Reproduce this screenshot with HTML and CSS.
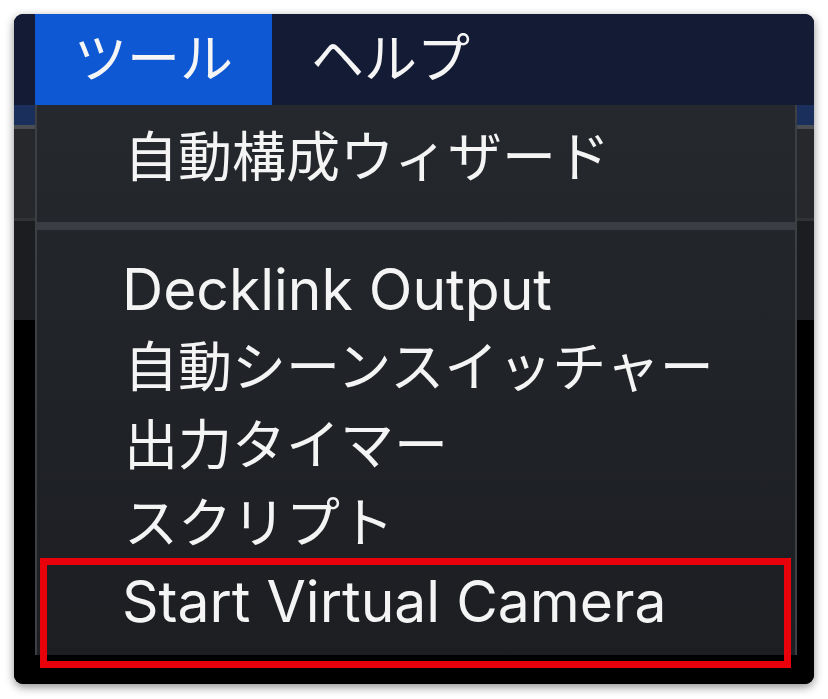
FILE: index.html
```html
<!DOCTYPE html>
<html>
<head>
    <meta charset="utf-8">
    <title>ツール メニュー</title>
    <link rel="stylesheet" href="styles.css">
</head>
<body>
    <div class="window">
        <div class="menubar">
            <div class="menubar-item active">ツール</div>
            <div class="menubar-item">ヘルプ</div>
        </div>

        <div class="app-body">
            <div class="band band-top"></div>
            <div class="band band-line"></div>
            <div class="band band-panel"></div>
            <div class="band band-line dim"></div>
            <div class="band band-dock"></div>
            <div class="band band-rest"></div>
        </div>

        <div class="dropdown">
            <div class="menu-item first">自動構成ウィザード</div>
            <div class="separator"></div>
            <div class="menu-item spaced latin">Decklink Output</div>
            <div class="menu-item">自動シーンスイッチャー</div>
            <div class="menu-item">出力タイマー</div>
            <div class="menu-item">スクリプト</div>
            <div class="menu-item latin">Start Virtual Camera</div>
        </div>

        <!-- annotation around the virtual camera entry -->
        <div class="highlight"></div>
    </div>
</body>
</html>
```

FILE: styles.css
```css
body {
    margin: 0;
    background: #fff;
    font-family: Inter, "Noto Sans CJK JP", sans-serif;
}
.window {
    position: relative;
    margin: 14px;
    width: 800px;
    height: 670px;
    border-radius: 9px;
    overflow: hidden;
    background: #000;
    box-shadow: 0 3px 10px rgba(0, 0, 0, 0.45);
    display: flex;
    flex-direction: column;
}
.menubar {
    height: 91px;
    flex: none;
    display: flex;
    padding-left: 21px;
    background: #131b35;
}
.menubar-item {
    padding: 0 39px;
    font-size: 53px;
    line-height: 91px;
    color: #f5f5f5;
}
.menubar-item.active {
    background: #0f58d4;
}
.app-body {
    flex: 1;
    display: flex;
    flex-direction: column;
}
.band-top {
    height: 20px;
    background: #1b2f5c;
}
.band-line {
    height: 4px;
    background: #4a4d52;
}
.band-line.dim {
    height: 3px;
    background: #303236;
}
.band-panel {
    height: 89px;
    background: #26282c;
}
.band-dock {
    height: 99px;
    background: #1c1d20;
}
.band-rest {
    flex: 1;
    background: #000;
}
.dropdown {
    position: absolute;
    left: 21px;
    top: 91px;
    width: 758px;
    height: 550px;
    border-left: 2px solid #3c3f44;
    border-right: 2px solid #3c3f44;
    background: linear-gradient(#25282d, #1c1e22);
}
.menu-item {
    height: 78px;
    line-height: 78px;
    padding-left: 87px;
    font-size: 54px;
    color: #f4f4f4;
    white-space: nowrap;
}
.menu-item.latin {
    font-size: 57px;
    padding-left: 85px;
}
.menu-item.first {
    padding-top: 14px;
    padding-bottom: 25px;
}
.menu-item.spaced {
    margin-top: 21px;
}
.separator {
    height: 8px;
    background: #3a3d43;
}
.highlight {
    position: absolute;
    left: 26px;
    top: 544px;
    width: 737px;
    height: 96px;
    border: 7px solid #e8000a;
}
```
